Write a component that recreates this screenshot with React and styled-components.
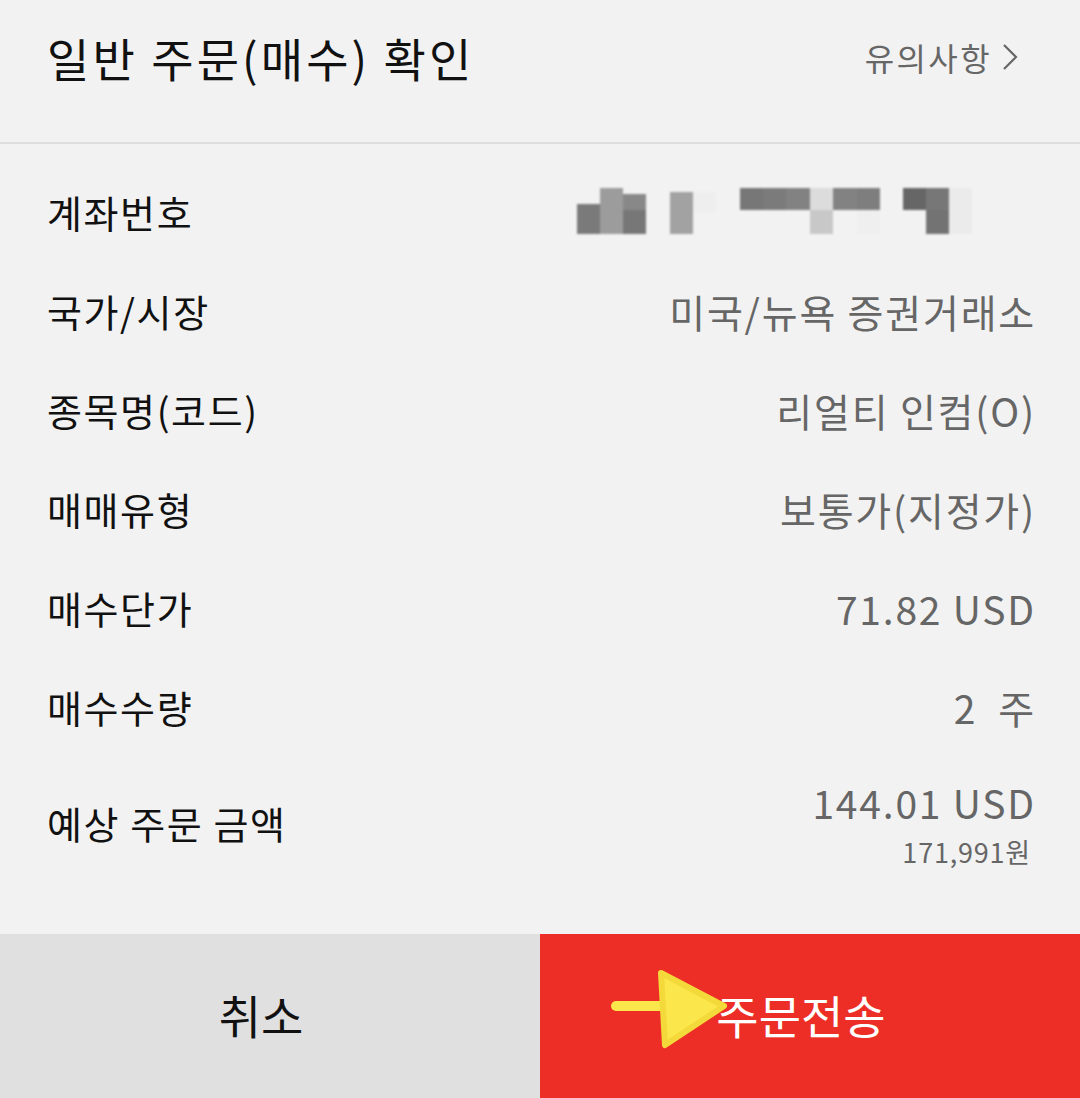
import React from 'react';
import styled, { createGlobalStyle } from 'styled-components';

const GlobalStyle = createGlobalStyle`
  html, body {
    margin: 0;
    padding: 0;
    background: #f2f2f2;
  }
  * {
    box-sizing: border-box;
  }
`;

const Pantalla = styled.div`
  width: 1080px;
  height: 1098px;
  display: flex;
  flex-direction: column;
  background: #f2f2f2;
  font-family: "Noto Sans CJK KR", "Noto Sans", sans-serif;
  overflow: hidden;
`;

const Cabecera = styled.header`
  height: 144px;
  display: flex;
  align-items: center;
  justify-content: space-between;
  padding: 0 62px 28px 47px;
  border-bottom: 2px solid #dedede;
`;

const Titulo = styled.h1`
  margin: 0;
  font-size: 46px;
  font-weight: 400;
  color: #111;
  letter-spacing: 3.1px;
`;

const Aviso = styled.a`
  display: flex;
  align-items: center;
  gap: 10px;
  font-size: 32px;
  letter-spacing: 2.4px;
  color: #666;
  text-decoration: none;
`;

const Lista = styled.div`
  display: flex;
  flex-direction: column;
  padding: 18px 46px 0 47px;
`;

const Fila = styled.div`
  height: ${p => p.$alto || 99}px;
  display: flex;
  align-items: center;
  justify-content: space-between;
`;

const Etiqueta = styled.span`
  font-size: 38px;
  letter-spacing: 1.6px;
  color: #111;
`;

const Valor = styled.span`
  font-size: 39px;
  letter-spacing: 1.8px;
  color: #666;
  white-space: pre;
  margin-right: -2px;
`;

const BloqueMonto = styled.div`
  display: flex;
  flex-direction: column;
  align-items: flex-end;
`;

const Secundario = styled.span`
  font-size: 27px;
  letter-spacing: 0.8px;
  color: #666;
  margin-top: 2px;
  margin-right: 3px;
`;

const Pie = styled.div`
  margin-top: auto;
  height: 164px;
  display: grid;
  grid-template-columns: 1fr 1fr;
`;

const Boton = styled.button`
  position: relative;
  border: none;
  margin: 0;
  font-family: inherit;
  font-size: 46px;
  background: ${p => (p.$primario ? '#ec2e26' : '#e0e0e0')};
  color: ${p => (p.$primario ? '#fff' : '#111')};
  cursor: pointer;
  padding: 0 18px 4px 0;
`;

const Flecha = styled.svg`
  position: absolute;
  left: 66px;
  top: 34px;
  pointer-events: none;
`;

const Mosaico = () => (
  <svg width="457" height="52" viewBox="0 0 457 52" style={{ filter: 'blur(0.8px)' }}>
    <rect x="0" y="18" width="23" height="30" fill="#7a7a7a" />
    <rect x="23" y="2" width="23" height="46" fill="#9c9c9c" />
    <rect x="46" y="8" width="23" height="16" fill="#888" />
    <rect x="46" y="24" width="23" height="24" fill="#777" />
    <rect x="93" y="6" width="23" height="42" fill="#a2a2a2" />
    <rect x="116" y="6" width="23" height="20" fill="#eeeeee" />
    <rect x="163" y="2" width="23" height="22" fill="#777" />
    <rect x="186" y="2" width="23" height="22" fill="#7b7b7b" />
    <rect x="209" y="2" width="24" height="22" fill="#828282" />
    <rect x="233" y="2" width="23" height="22" fill="#dcdcdc" />
    <rect x="233" y="24" width="23" height="24" fill="#c8c8c8" />
    <rect x="256" y="2" width="24" height="22" fill="#828282" />
    <rect x="280" y="2" width="23" height="22" fill="#7e7e7e" />
    <rect x="280" y="24" width="23" height="24" fill="#efefef" />
    <rect x="326" y="2" width="23" height="22" fill="#666" />
    <rect x="349" y="2" width="23" height="22" fill="#777" />
    <rect x="349" y="24" width="23" height="24" fill="#737373" />
    <rect x="372" y="2" width="23" height="46" fill="#ebebeb" />
  </svg>
);

const filas = [
  { etiqueta: '국가/시장', valor: '미국/뉴욕 증권거래소' },
  { etiqueta: '종목명(코드)', valor: '리얼티 인컴(O)' },
  { etiqueta: '매매유형', valor: '보통가(지정가)' },
  { etiqueta: '매수단가', valor: '71.82 USD' },
  { etiqueta: '매수수량', valor: '2  주' },
];

const ConfirmarOrden = () => (
  <Pantalla>
    <GlobalStyle />
    <Cabecera>
      <Titulo>일반 주문(매수) 확인</Titulo>
      <Aviso href="#">
        유의사항
        <svg width="16" height="30" viewBox="0 0 16 30">
          <polyline points="2,3 14,15 2,27" fill="none" stroke="#666" strokeWidth="2.2" />
        </svg>
      </Aviso>
    </Cabecera>
    <Lista>
      <Fila>
        <Etiqueta>계좌번호</Etiqueta>
        <Mosaico />
      </Fila>
      {filas.map(f => (
        <Fila key={f.etiqueta}>
          <Etiqueta>{f.etiqueta}</Etiqueta>
          <Valor>{f.valor}</Valor>
        </Fila>
      ))}
      <Fila $alto={132}>
        <Etiqueta>예상 주문 금액</Etiqueta>
        <BloqueMonto>
          <Valor>144.01 USD</Valor>
          <Secundario>171,991원</Secundario>
        </BloqueMonto>
      </Fila>
    </Lista>
    <Pie>
      <Boton>취소</Boton>
      <Boton $primario>
        <Flecha width="124" height="84" viewBox="0 0 124 84">
          <line x1="10" y1="38" x2="62" y2="38" stroke="#fbe64c" strokeWidth="10" strokeLinecap="round" />
          <polygon points="55,5 118,38 59,77" fill="#fbe64c" stroke="#f4d93a" strokeWidth="6" strokeLinejoin="round" />
        </Flecha>
        주문전송
      </Boton>
    </Pie>
  </Pantalla>
);

export default ConfirmarOrden;
